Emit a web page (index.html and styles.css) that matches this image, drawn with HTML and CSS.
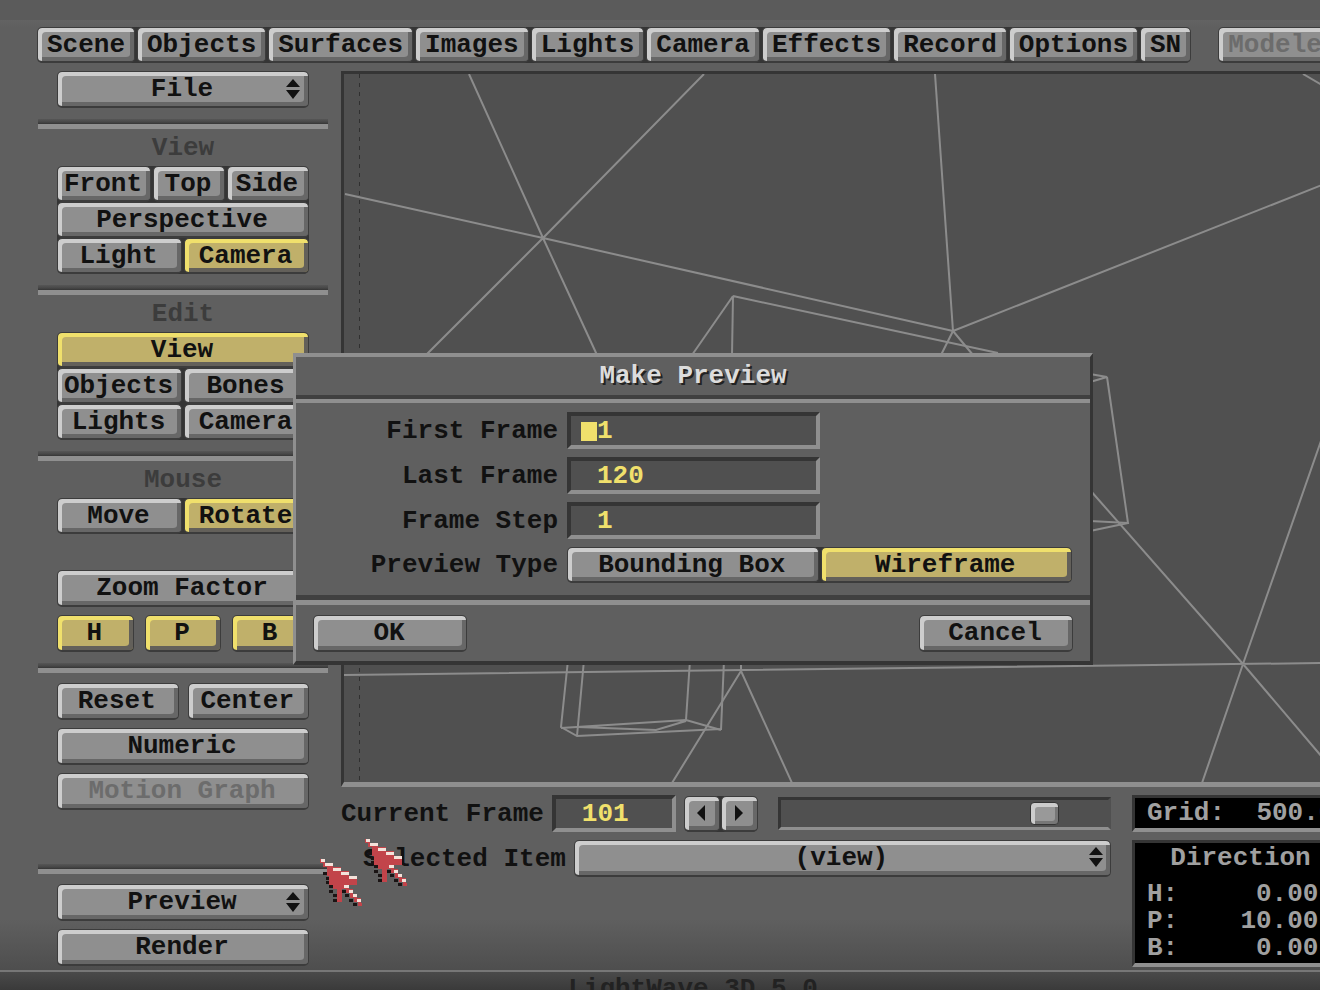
FILE: index.html
```html
<!DOCTYPE html>
<html lang="en">
<head>
<meta charset="utf-8">
<title>LightWave 3D 5.0</title>
<link rel="stylesheet" href="styles.css">
</head>
<body>
<svg class="sprites" aria-hidden="true">
  <symbol id="updown" viewBox="0 0 14 20">
    <path d="M7 0 L14 8 H0 Z M0 11 H14 L7 20 Z" fill="#111"/>
  </symbol>
  <symbol id="pointer" viewBox="0 0 44 50">
    <path fill="#c2444a" d="M0 1H5V5H13V9H21V13H29V18H37V27H24V31H22V44H17V31H13V27H9V18H7V13H7V9H3V5H0Z"/>
    <path fill="#c2444a" d="M23 27H29V31H33V36H37V40H41V45H42V48H38V44H34V40H30V35H26V31H23Z"/>
    <path fill="#f4e2da" d="M1 1h4v3h-4zM5 5h8v3h-8zM13 10h8v3h-8zM21 14h8v3h-8zM29 18h8v3h-8zM24 27h5v3h-5zM29 32h4v3h-4zM33 36h4v3h-4zM37 41h4v3h-4z"/>
    <path fill="#1a1414" d="M3 14h4v3h-4zM6 19h3v3h-3zM6 23h3v3h-3zM9 27h4v3h-4zM9 32h4v3h-4zM13 36h4v3h-4zM13 41h4v3h-4zM22 32h4v3h-4zM25 36h4v3h-4zM29 41h4v3h-4zM33 45h4v3h-4z"/>
  </symbol>
</svg>

<nav class="tabs">
  <div class="group tab-group">
    <button class="btn">Scene</button>
    <button class="btn">Objects</button>
    <button class="btn">Surfaces</button>
    <button class="btn">Images</button>
    <button class="btn">Lights</button>
    <button class="btn">Camera</button>
    <button class="btn">Effects</button>
    <button class="btn">Record</button>
    <button class="btn">Options</button>
    <button class="btn">SN</button>
  </div>
  <button class="btn tab-modeler" disabled>Modeler</button>
</nav>

<main class="workspace">
  <aside class="sidebar">
    <div class="panel">
      <button class="btn menu" aria-haspopup="menu">File<svg class="updown"><use href="#updown"/></svg></button>
    </div>
    <hr class="rule">
    <section class="panel">
      <h2 class="heading">View</h2>
      <div class="group">
        <div class="row thirds">
          <button class="btn">Front</button>
          <button class="btn">Top</button>
          <button class="btn">Side</button>
        </div>
        <button class="btn">Perspective</button>
        <div class="row halves">
          <button class="btn">Light</button>
          <button class="btn on" aria-pressed="true">Camera</button>
        </div>
      </div>
    </section>
    <hr class="rule">
    <section class="panel">
      <h2 class="heading">Edit</h2>
      <div class="group">
        <button class="btn on" aria-pressed="true">View</button>
        <div class="row halves">
          <button class="btn">Objects</button>
          <button class="btn">Bones</button>
          <button class="btn">Lights</button>
          <button class="btn">Camera</button>
        </div>
      </div>
    </section>
    <hr class="rule">
    <section class="panel">
      <h2 class="heading">Mouse</h2>
      <div class="group row halves">
        <button class="btn">Move</button>
        <button class="btn on" aria-pressed="true">Rotate</button>
      </div>
      <div class="stack zoom">
        <button class="btn">Zoom Factor</button>
        <div class="axes">
          <button class="btn on" aria-pressed="true">H</button>
          <button class="btn on" aria-pressed="true">P</button>
          <button class="btn on" aria-pressed="true">B</button>
        </div>
      </div>
    </section>
    <hr class="rule">
    <div class="panel stack">
      <div class="pair">
        <button class="btn">Reset</button>
        <button class="btn">Center</button>
      </div>
      <button class="btn">Numeric</button>
      <button class="btn" disabled>Motion Graph</button>
    </div>
    <hr class="rule last">
    <div class="panel stack">
      <button class="btn menu" aria-haspopup="menu">Preview<svg class="updown"><use href="#updown"/></svg></button>
      <button class="btn">Render</button>
    </div>
  </aside>

  <div class="stage">
    <div class="viewport">
      <svg class="wire" viewBox="344 74 976 708" preserveAspectRatio="xMinYMin slice" role="img" aria-label="Camera view wireframe">
        <path class="safe" d="M359.500 74V782"/>
        <path d="M345 194L543 238L953 331M469 74L543 238L597 355M704 74L543 238L426 355"/>
        <path d="M733 296L998 353M733 296L732 355M733 296L692 355"/>
        <path d="M935 74L953 331L1322 185M953 331L941 355M953 331L973 355M1303 74L1322 85"/>
        <path d="M1090 374L1107 377L1090 382M1107 377L1128 523L1090 521M1128 523L1090 531"/>
        <path d="M1090 490L1243 664L1322 757M1322 438L1243 664L1202 783M344 675L1322 663"/>
        <path d="M568 660L561 727L577 736L721 729M584 660L577 736M690 660L686 720M724 660L721 730"/>
        <path d="M561 728L686 720L721 730M686 721L656 730L578 727M741 660V671L672 783M741 671L792 783"/>
      </svg>
    </div>

    <div class="console">
      <div class="controls">
        <div class="line">
          <label for="frame">Current Frame</label>
          <input class="field frame" id="frame" type="text" value="101">
          <div class="group stepper">
            <button class="btn" aria-label="Previous frame"><svg width="8" height="16" viewBox="0 0 8 16"><path d="M8 0V16L0 8Z" fill="#111"/></svg></button>
            <button class="btn" aria-label="Next frame"><svg width="8" height="16" viewBox="0 0 8 16"><path d="M0 0V16L8 8Z" fill="#111"/></svg></button>
          </div>
          <input class="slider" type="range" min="0" max="120" value="101" aria-label="Frame slider">
        </div>
        <div class="line item-line">
          <label for="item">Selected Item</label>
          <div class="picker">
            <select class="btn" id="item"><option>(view)</option></select>
            <svg class="updown"><use href="#updown"/></svg>
          </div>
        </div>
      </div>
      <div class="readouts">
        <dl class="readout"><div class="pairline"><dt>Grid:</dt><dd>500.00</dd></div></dl>
        <div class="readout tall">
          <h3 class="readout-title">Direction</h3>
          <dl>
            <div class="pairline"><dt>H:</dt><dd>0.00°</dd></div>
            <div class="pairline"><dt>P:</dt><dd>10.00°</dd></div>
            <div class="pairline"><dt>B:</dt><dd>0.00°</dd></div>
          </dl>
        </div>
      </div>
    </div>
  </div>
</main>

<footer class="status">LightWave 3D 5.0</footer>

<form class="dialog" role="dialog" aria-labelledby="dialog-title">
  <h1 class="dialog-title" id="dialog-title">Make Preview</h1>
  <div class="dialog-body">
    <label for="first">First Frame</label>
    <div class="entry"><input class="field" id="first" type="text" value="1"><span class="caret"></span></div>
    <label for="last">Last Frame</label>
    <div class="entry"><input class="field" id="last" type="text" value="120"></div>
    <label for="step">Frame Step</label>
    <div class="entry"><input class="field" id="step" type="text" value="1"></div>
    <span id="type-label">Preview Type</span>
    <div class="group row halves" role="group" aria-labelledby="type-label">
      <button type="button" class="btn">Bounding Box</button>
      <button type="button" class="btn on" aria-pressed="true">Wireframe</button>
    </div>
  </div>
  <div class="dialog-actions">
    <button type="button" class="btn">OK</button>
    <button type="button" class="btn">Cancel</button>
  </div>
</form>

<svg class="pointer main-pointer" aria-hidden="true"><use href="#pointer"/></svg>
<svg class="pointer ghost-pointer" aria-hidden="true"><use href="#pointer"/></svg>
</body>
</html>
```

FILE: styles.css
```css
:root {
  --face: #5f5f5f;
  --well: #505050;
  --dark: #353535;
  --light: #8f8f8f;
  --shine: #cdcdcd;
  --ink: #111;
  --gold: #f0e06c;
}

* { box-sizing: border-box; }

body {
  margin: 0;
  position: relative;
  display: flex;
  flex-direction: column;
  height: 100vh;
  overflow: hidden;
  background: linear-gradient(#5b5b5b 0 20px, #636363 20px, var(--face) 28px, var(--face) calc(100% - 70px), #4e4e4e calc(100% - 20px));
  color: var(--ink);
  font: bold 26px/1 "Liberation Mono", monospace;
}

button, input, select { font: inherit; color: inherit; margin: 0; }
h1, h2, h3, dl, dd { margin: 0; font: inherit; }
.sprites { position: absolute; width: 0; height: 0; }

/* Bevelled buttons */
.btn {
  display: flex;
  align-items: center;
  justify-content: center;
  width: 100%;
  height: 37px;
  padding: 0 2px 0 0;
  border: 1px solid #3c3c3c;
  border-bottom-width: 2px;
  border-radius: 5px;
  background: var(--light);
  box-shadow: inset 4px 4px 0 var(--shine), inset -4px -4px 0 #676767;
  white-space: nowrap;
}
.btn.on {
  background: #c0b06a;
  box-shadow: inset 4px 4px 0 var(--gold), inset -4px -4px 0 #63605a;
}
.btn:disabled { color: #6c6c6c; }
.menu { position: relative; }
.updown {
  position: absolute;
  right: 8px;
  top: 7px;
  width: 14px;
  height: 20px;
  pointer-events: none;
}

/* Joined buttons share a dark backing */
.group { background: var(--dark); border-radius: 6px; }
.group .btn, .tabs .btn { height: 36px; }
.row { display: grid; column-gap: 2px; }
.halves { grid-template-columns: 1fr 1fr; }
.thirds { grid-template-columns: 94fr 72fr 82fr; }

.tabs { display: flex; gap: 27px; padding: 27px 0 8px 37px; }
.tabs .btn { width: auto; padding-left: 9px; padding-right: 9px; flex: none; }
.tab-group { display: flex; gap: 2px; flex: none; }

.workspace {
  flex: 1;
  min-height: 0;
  display: grid;
  grid-template-columns: 290px 1fr;
  gap: 13px;
  padding-left: 38px;
}

.sidebar { display: flex; flex-direction: column; }
.panel { padding: 0 19px; }
.heading { height: 37px; line-height: 38px; text-align: center; color: #3c3c3c; }
.rule {
  width: 100%;
  height: 10px;
  margin: 11px 0 0;
  border: 0;
  border-bottom: 5px solid var(--light);
  background: linear-gradient(#565656, #474747 60%, var(--dark));
}
.stack { display: flex; flex-direction: column; gap: 8px; }
.rule + .stack { padding-top: 10px; }
.rule.last { margin-top: 54px; }
.zoom { padding-top: 36px; }
.axes { display: grid; grid-template-columns: repeat(3, 1fr); gap: 11px; }
.pair { display: grid; grid-template-columns: 1fr 1fr; gap: 9px; }

.stage { display: flex; flex-direction: column; min-width: 0; }
.viewport {
  flex: 1;
  min-height: 0;
  border: 3px solid var(--dark);
  border-right: 0;
  border-bottom: 5px solid var(--light);
  background: var(--well);
}
.wire { display: block; width: 100%; height: 100%; fill: none; stroke: #8c8c8c; stroke-width: 2; }
.safe { stroke: #303030; stroke-width: 1; stroke-dasharray: 4 5; }

.console { display: grid; grid-template-columns: 1fr 188px; gap: 21px; padding: 8px 0 4px; }
.controls, .readouts { display: flex; flex-direction: column; gap: 8px; min-width: 0; }
.line { display: flex; align-items: center; gap: 8px; white-space: nowrap; }
.item-line { padding-left: 22px; }

.field {
  width: 100%;
  height: 37px;
  padding: 0 0 0 26px;
  border: 4px solid;
  border-color: var(--dark) var(--light) var(--light) var(--dark);
  border-radius: 0;
  background: var(--well);
  color: var(--gold);
}
.frame { width: 124px; }
.stepper { display: flex; gap: 1px; width: 74px; flex: none; }
.slider {
  flex: 1;
  min-width: 0;
  height: 33px;
  margin-left: 12px;
  padding: 0 2px;
  appearance: none;
  background: var(--well);
  border: 3px solid;
  border-color: var(--dark) var(--well) var(--light) var(--dark);
}
.slider::-webkit-slider-thumb {
  appearance: none;
  width: 29px;
  height: 23px;
  border: 1px solid var(--dark);
  border-radius: 4px;
  background: #999;
  box-shadow: inset 4px 4px 0 var(--shine), inset -3px -3px 0 #777;
}
.picker { position: relative; flex: 1; }
.picker .btn { appearance: none; text-align: center; text-align-last: center; }

.readout {
  height: 37px;
  padding: 0 0 0 12px;
  border: 3px solid var(--dark);
  border-right: 0;
  border-bottom: 4px solid var(--light);
  background: #000;
  color: #a0a0a0;
  overflow: hidden;
}
.readout.tall { height: 127px; }
.pairline { display: flex; justify-content: space-between; width: 187px; line-height: 27px; }
.readout > .pairline { line-height: 30px; width: 203px; }
.readout-title { width: 187px; height: 38px; line-height: 30px; text-align: center; }

.status {
  height: 20px;
  padding: 4px 0 0 66px;
  border-top: 2px solid #777;
  background: linear-gradient(#4a4a4a, #3a3a3a);
  color: #222;
  text-align: center;
  overflow: hidden;
}

/* Modal window */
.dialog {
  position: absolute;
  left: 293px;
  top: 353px;
  width: 800px;
  border: 3px solid;
  border-width: 4px 3px;
  border-color: var(--light) var(--dark) var(--dark) var(--light);
  background: var(--face);
}
.dialog-title {
  height: 42px;
  line-height: 38px;
  border-bottom: 4px solid #404040;
  text-align: center;
  color: #dcdcdc;
  text-shadow: 2px 2px 0 #222;
}
.dialog-body {
  display: grid;
  grid-template-columns: 262px 1fr;
  gap: 8px 9px;
  align-items: center;
  padding: 9px 18px 12px 0;
  border-top: 4px solid var(--light);
  border-bottom: 5px solid #404040;
  text-align: right;
}
.entry { position: relative; width: 253px; }
.caret {
  position: absolute;
  left: 14px;
  top: 10px;
  width: 16px;
  height: 19px;
  background: var(--gold);
}
.dialog-actions {
  display: flex;
  justify-content: space-between;
  padding: 10px 17px 9px;
  border-top: 5px solid var(--light);
}
.dialog-actions .btn { width: 154px; }

.pointer { position: absolute; width: 44px; height: 50px; }
.main-pointer { left: 320px; top: 858px; }
.ghost-pointer { left: 365px; top: 838px; }
```
